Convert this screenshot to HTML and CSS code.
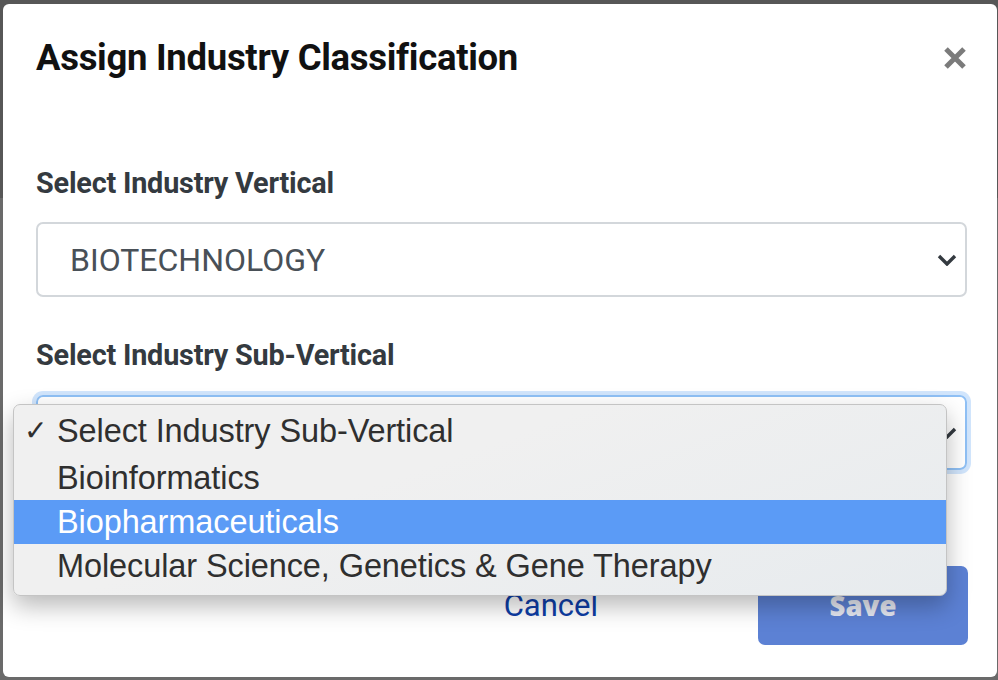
FILE: index.html
```html
<!DOCTYPE html>
<html>
<head>
<meta charset="utf-8">
<link rel="stylesheet" href="styles.css">
</head>
<body>
<div class="modal">
  <div class="modal-header">
    <h1 class="title">Assign Industry Classification</h1>
    <button class="close" aria-label="Close">
      <svg width="24" height="24" viewBox="0 0 24 24"><path d="M3 3 L21 21 M21 3 L3 21" stroke="#7b7b7b" stroke-width="5" stroke-linecap="butt"/></svg>
    </button>
  </div>
  <div class="modal-body">
    <label class="label first">Select Industry Vertical</label>
    <div class="select">
      <span class="value">BIOTECHNOLOGY</span>
      <svg class="chev" width="20" height="12" viewBox="0 0 20 12"><path d="M2 2 L10 10 L18 2" fill="none" stroke="#343a40" stroke-width="3.4"/></svg>
    </div>
    <label class="label second">Select Industry Sub-Vertical</label>
    <div class="select focus">
      <span class="value"></span>
      <svg class="chev" width="20" height="12" viewBox="0 0 20 12"><path d="M2 2 L10 10 L18 2" fill="none" stroke="#343a40" stroke-width="3.4"/></svg>
    </div>
  </div>
  <div class="modal-footer">
    <button class="btn-cancel">Cancel</button>
    <button class="btn-save">Save</button>
  </div>
  <ul class="menu">
    <li class="opt checked"><span class="check">✓</span>Select Industry Sub-Vertical</li>
    <li class="opt">Bioinformatics</li>
    <li class="opt active">Biopharmaceuticals</li>
    <li class="opt">Molecular Science, Genetics &amp; Gene Therapy</li>
  </ul>
</div>
</body>
</html>
```

FILE: styles.css
```css
html, body {
  margin: 0;
  padding: 0;
}
body {
  width: 998px;
  height: 680px;
  overflow: hidden;
  background: linear-gradient(to bottom, #575757 0, #575757 198px, #6a6a6a 198px);
  font-family: Roboto, "Liberation Sans", sans-serif;
}
.modal {
  position: relative;
  margin: 4px 1px 0 3px;
  height: 673px;
  background: #fff;
  border-radius: 6px;
  box-sizing: border-box;
  padding: 0 30px 0 33px;
}
.modal-header {
  display: flex;
  justify-content: space-between;
  align-items: center;
  padding-top: 34px;
}
.title {
  margin: 0;
  font-size: 36.5px;
  line-height: 40px;
  font-weight: 700;
  color: #111;
  letter-spacing: -0.3px;
}
.close {
  border: 0;
  background: none;
  padding: 0;
  width: 24px;
  height: 24px;
  display: flex;
}
.modal-body {
  display: flex;
  flex-direction: column;
}
.label {
  display: block;
  font-size: 28.8px;
  line-height: 30px;
  font-weight: 700;
  color: #343a40;
  letter-spacing: -0.2px;
}
.label.first { margin-top: 90px; }
.label.second { margin-top: 43px; }
.select {
  margin-top: 24px;
  height: 75px;
  box-sizing: border-box;
  border: 2px solid #d3d7db;
  border-radius: 7px;
  display: flex;
  align-items: center;
  justify-content: space-between;
  padding: 0 8px 0 32px;
}
.select.focus {
  margin-top: 25px;
  border-color: #8fc0f5;
  box-shadow: 0 0 0 4px rgba(90, 160, 245, 0.28);
}
.value {
  font-size: 32px;
  color: #495057;
}
.modal-footer {
  display: flex;
  justify-content: flex-end;
  align-items: center;
  margin-top: 96px;
}
.btn-cancel {
  border: 0;
  background: none;
  font-family: Roboto, "Liberation Sans", sans-serif;
  font-size: 31px;
  color: #0e3ea6;
  padding: 0;
  margin-right: 160px;
  line-height: 40px;
}
.btn-save {
  width: 210px;
  height: 79px;
  border: 0;
  border-radius: 7px;
  background: #5c81d4;
  color: #e6e9f2;
  font-family: "Open Sans", sans-serif;
  font-weight: 800;
  font-size: 27.5px;
  margin-right: -1px;
}
.menu {
  position: absolute;
  left: 10px;
  top: 400px;
  width: 934px;
  height: 192px;
  box-sizing: border-box;
  margin: 0;
  padding: 5px 0 0 0;
  list-style: none;
  background: linear-gradient(160deg, #f0f0f0 40%, #e7ebee 100%);
  border: 1px solid #c4c4c4;
  border-radius: 7px;
  box-shadow: 0 10px 24px rgba(0, 0, 0, 0.28);
  font-family: "Liberation Sans", Arial, sans-serif;
}
.opt {
  position: relative;
  height: 44px;
  line-height: 44px;
  padding-left: 43px;
  font-size: 32.5px;
  color: #2f2f2f;
  letter-spacing: -0.1px;
}
.opt.checked {
  height: 46px;
  line-height: 42px;
}
.opt.active {
  background: #5b9bf6;
  color: #fff;
}
.check {
  position: absolute;
  left: 10px;
  top: 0;
  font-size: 28px;
}
```
